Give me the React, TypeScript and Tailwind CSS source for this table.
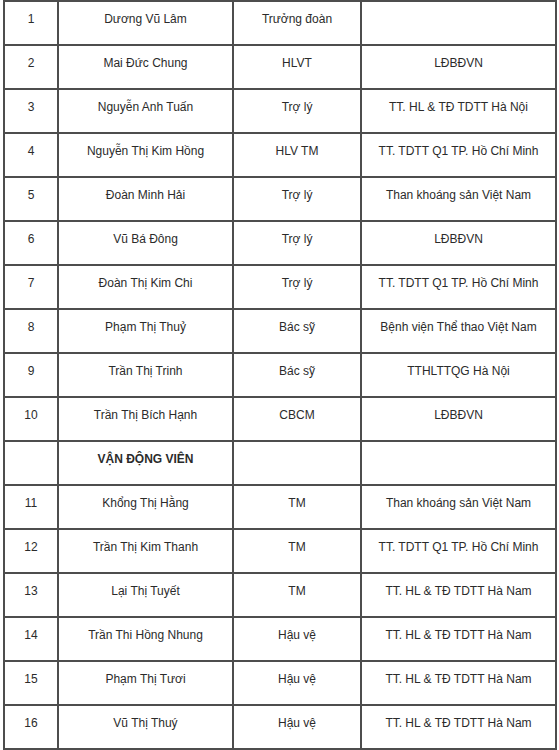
const rows: [string, string, string, string][] = [
  ["1", "Dương Vũ Lâm", "Trưởng đoàn", ""],
  ["2", "Mai Đức Chung", "HLVT", "LĐBĐVN"],
  ["3", "Nguyễn Anh Tuấn", "Trợ lý", "TT. HL & TĐ TDTT Hà Nội"],
  ["4", "Nguyễn Thị Kim Hồng", "HLV TM", "TT. TDTT Q1 TP. Hồ Chí Minh"],
  ["5", "Đoàn Minh Hải", "Trợ lý", "Than khoáng sản Việt Nam"],
  ["6", "Vũ Bá Đông", "Trợ lý", "LĐBĐVN"],
  ["7", "Đoàn Thị Kim Chi", "Trợ lý", "TT. TDTT Q1 TP. Hồ Chí Minh"],
  ["8", "Phạm Thị Thuỷ", "Bác sỹ", "Bệnh viện Thể thao Việt Nam"],
  ["9", "Trần Thị Trinh", "Bác sỹ", "TTHLTTQG Hà Nội"],
  ["10", "Trần Thị Bích Hạnh", "CBCM", "LĐBĐVN"],
  ["", "VẬN ĐỘNG VIÊN", "", ""],
  ["11", "Khổng Thị Hằng", "TM", "Than khoáng sản Việt Nam"],
  ["12", "Trần Thị Kim Thanh", "TM", "TT. TDTT Q1 TP. Hồ Chí Minh"],
  ["13", "Lại Thị Tuyết", "TM", "TT. HL & TĐ TDTT Hà Nam"],
  ["14", "Trần Thi Hồng Nhung", "Hậu vệ", "TT. HL & TĐ TDTT Hà Nam"],
  ["15", "Phạm Thị Tươi", "Hậu vệ", "TT. HL & TĐ TDTT Hà Nam"],
  ["16", "Vũ Thị Thuý", "Hậu vệ", "TT. HL & TĐ TDTT Hà Nam"],
];

export default function App() {
  return (
    <div className="bg-white min-h-screen pl-[3px] font-['Liberation_Sans',Arial,sans-serif] text-[12px] text-[#2b2b2b]">
      {/* table drawn as grid: dark bg + 2px gaps make the cell borders */}
      <div className="grid w-[554px] grid-cols-[52px_173px_126px_193px] gap-[2px] bg-[#4d4d4d] p-[2px]">
        {rows.map((r, i) => {
          const heading = r[0] === "" && r[1] !== "";
          return r.map((cell, j) => (
            <div
              key={`${i}-${j}`}
              className={`h-[42px] bg-white pt-[9px] text-center leading-[17px] ${heading ? "font-bold" : ""}`}
            >
              {cell}
            </div>
          ));
        })}
      </div>
    </div>
  );
}
